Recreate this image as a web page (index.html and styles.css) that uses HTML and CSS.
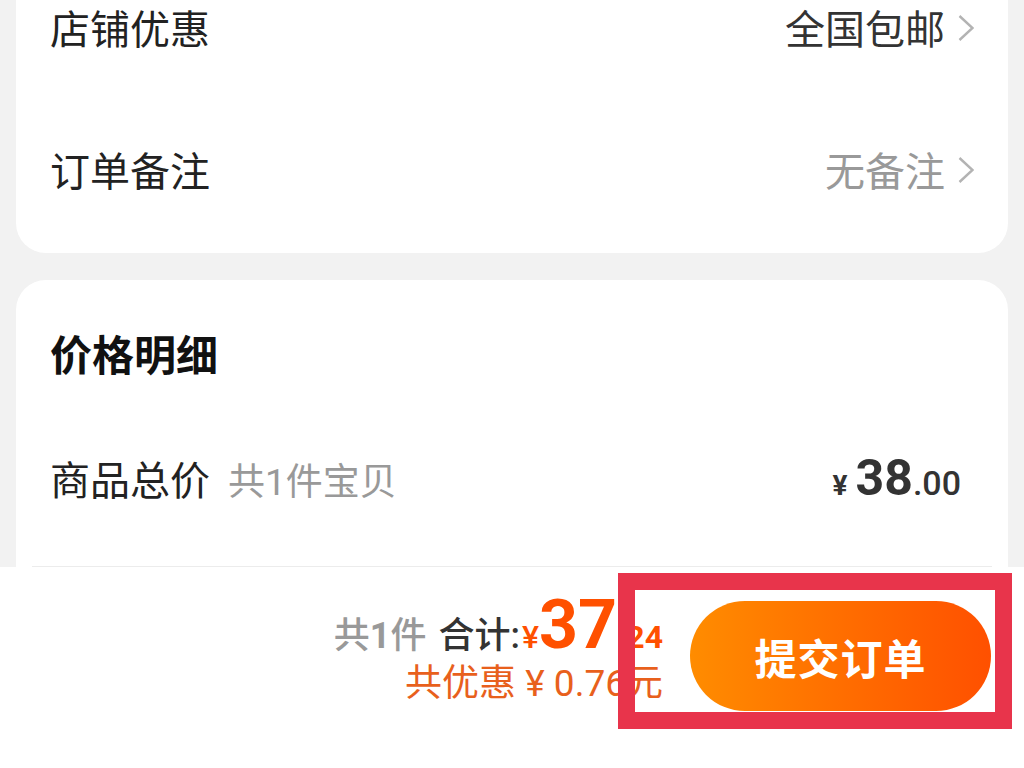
FILE: index.html
```html
<!DOCTYPE html>
<html lang="zh-CN">
<head>
    <meta charset="UTF-8">
    <meta name="viewport" content="width=device-width, initial-scale=1.0">
    <title>确认订单</title>
    <link rel="stylesheet" href="styles.css">
</head>
<body>

    <div class="page">
        <div class="page-main">
            <div class="card card-top">
                <div class="row">
                    <span class="row-label">店铺优惠</span>
                    <span class="row-value">
                        全国包邮
                        <svg class="chevron" width="16" height="28" viewBox="0 0 16 28"><polyline points="1.5,2 14.5,14 1.5,26" fill="none" stroke="currentColor" stroke-width="2.4"></polyline></svg>
                    </span>
                </div>
                <div class="row">
                    <span class="row-label">订单备注</span>
                    <span class="row-value muted">
                        无备注
                        <svg class="chevron" width="16" height="28" viewBox="0 0 16 28"><polyline points="1.5,2 14.5,14 1.5,26" fill="none" stroke="currentColor" stroke-width="2.4"></polyline></svg>
                    </span>
                </div>
            </div>

            <div class="card card-price">
                <h2 class="card-title">价格明细</h2>
                <div class="row price-row">
                    <span class="row-label">商品总价 <span class="row-note">共1件宝贝</span></span>
                    <span class="price"><span class="price-sign">¥</span><span class="price-int">38</span><span class="price-dec">.00</span></span>
                </div>
                <div class="divider"></div>
            </div>
        </div>

        <div class="submit-bar">
            <div class="summary">
                <div class="summary-total">
                    <span class="summary-count">共<b>1</b>件</span>
                    <span class="summary-label">合计:</span>
                    <span class="total-sign">¥</span><span class="total-int">37</span><span class="total-dec">.24</span>
                </div>
                <div class="summary-discount">共优惠 ¥ 0.76元</div>
            </div>
            <button class="submit-button">提交订单</button>
            <div class="highlight"></div>
        </div>
    </div>

</body>
</html>
```

FILE: styles.css
```css
:root {
    --font-family: Roboto, "Noto Sans CJK SC", "Noto Sans", sans-serif;
    --page-bg: #f2f2f2;
    --card-bg: #ffffff;
    --text-color: #222222;
    --text-value: #333333;
    --text-muted: #999999;
    --chevron-color: #b3b3b3;
    --accent: #ff5000;
    --accent-soft: #e8601c;
    --highlight: #e8344b;
}

body {
    margin: 0;
    font-family: var(--font-family);
    background-color: var(--page-bg);
    color: var(--text-color);
}

.page {
    display: flex;
    flex-direction: column;
    height: 768px;
    overflow: hidden;
}

.page-main {
    flex: 1;
    overflow: hidden;
}

.card {
    background-color: var(--card-bg);
    border-radius: 30px;
    margin: 0 16px;
    padding: 0 34px;
}

.card-top {
    margin-top: -44px;
    padding-bottom: 13px;
}

.row {
    display: flex;
    align-items: center;
    justify-content: space-between;
    height: 142px;
    font-size: 40px;
}

.row-label { color: var(--text-color); }

.row-value {
    display: flex;
    align-items: center;
    gap: 13px;
    color: var(--text-value);
}
.row-value.muted { color: var(--text-muted); }
.row-value .chevron { color: var(--chevron-color); margin-top: 2px; }

.card-price {
    margin-top: 27px;
    padding-top: 40px;
    padding-bottom: 60px;
}

.card-title {
    margin: 0;
    height: 74px;
    line-height: 74px;
    font-size: 42px;
    font-weight: 700;
    color: #111111;
}

.price-row { height: 168px; }

.row-note {
    margin-left: 8px;
    font-size: 37px;
    color: var(--text-muted);
}

.price {
    display: flex;
    align-items: baseline;
    margin-right: 13px;
    color: var(--text-value);
    font-weight: 700;
}
.price-sign { font-size: 28px; margin-right: 8px; }
.price-int { font-size: 50px; }
.price-dec { font-size: 34px; font-weight: 500; }

.divider {
    height: 1px;
    margin: 4px -18px 0;
    background-color: #ececec;
}

.submit-bar {
    position: relative;
    flex: 0 0 201px;
    display: flex;
    justify-content: flex-end;
    align-items: flex-start;
    gap: 28px;
    padding: 34px 33px 0 0;
    box-sizing: border-box;
    background-color: var(--card-bg);
}

.summary {
    display: flex;
    flex-direction: column;
    align-items: flex-end;
    margin-top: -4px;
    margin-right: -1px;
}

.summary-total {
    display: flex;
    align-items: baseline;
    height: 56px;
    line-height: 56px;
    font-weight: 500;
}

.summary-count { font-size: 36px; color: var(--text-muted); margin-right: 12px; }
.summary-count b { font-weight: 700; }
.summary-label { font-size: 36px; color: var(--text-value); }
.total-sign { font-size: 32px; color: var(--accent); margin-left: 2px; }
.total-int { font-size: 68px; font-weight: 700; color: var(--accent); }
.total-dec { font-size: 32px; font-weight: 700; color: var(--accent); }

.summary-discount {
    margin-top: 8px;
    font-size: 37px;
    line-height: 46px;
    color: var(--accent-soft);
}

.submit-button {
    width: 301px;
    height: 110px;
    border: none;
    border-radius: 55px;
    background: linear-gradient(90deg, #ff8c00, #ff5000);
    color: #ffffff;
    font-family: var(--font-family);
    font-size: 42px;
    font-weight: 700;
    letter-spacing: 1px;
    cursor: pointer;
}

/* annotation box drawn over the totals and the button */
.highlight {
    position: absolute;
    left: 618px;
    top: 6px;
    width: 360px;
    height: 122px;
    border: 17px solid var(--highlight);
}
```
